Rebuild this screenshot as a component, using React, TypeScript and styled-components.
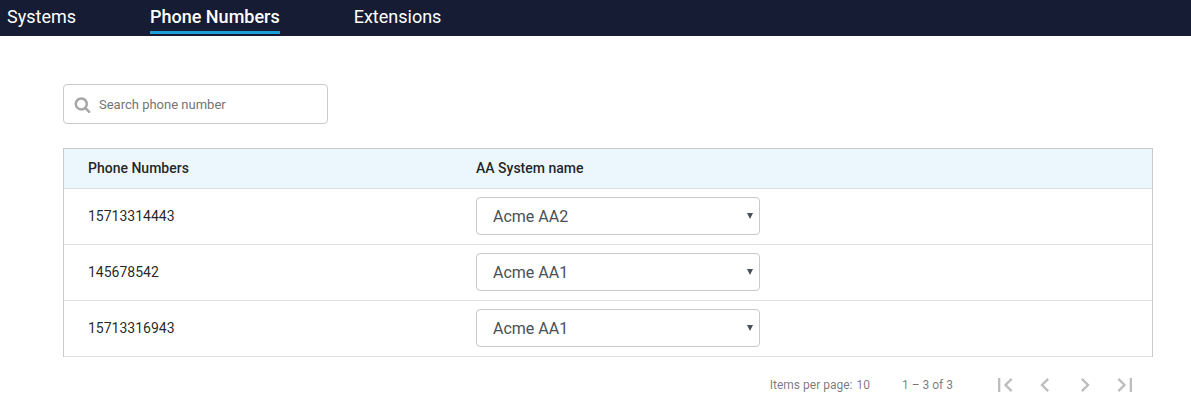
import React from "react";
import styled, { createGlobalStyle } from "styled-components";

const GlobalStyle = createGlobalStyle`
  *, *::before, *::after { box-sizing: border-box; }
  body {
    margin: 0;
    background: #fff;
    font-family: Roboto, "Liberation Sans", sans-serif;
    color: rgba(0, 0, 0, 0.87);
  }
`;

const NavBar = styled.nav`
  display: flex;
  height: 36px;
  padding-left: 7px;
  gap: 74px;
  background: #151c33;
`;

const NavLink = styled.a<{ $active?: boolean }>`
  height: 34px;
  color: #fff;
  font-size: 18px;
  line-height: 33px;
  font-weight: ${(p) => (p.$active ? 500 : 400)};
  border-bottom: 3px solid ${(p) => (p.$active ? "#1e9fd8" : "transparent")};
  white-space: nowrap;
`;

const Content = styled.main`
  padding: 48px 38px 0 63px;
`;

const SearchBox = styled.label`
  display: flex;
  align-items: center;
  width: 265px;
  height: 40px;
  padding: 0 10px;
  border: 1px solid #c9cacc;
  border-radius: 4px;
`;

const SearchIcon = styled.svg`
  width: 17px;
  height: 17px;
  flex: none;
  fill: #a6a6a6;
`;

const SearchInput = styled.input`
  flex: 1;
  min-width: 0;
  margin-left: 8px;
  padding: 0;
  border: 0;
  outline: 0;
  background: transparent;
  font: 400 13px Roboto, sans-serif;
  &::placeholder { color: #757575; opacity: 1; }
`;

const Table = styled.section`
  margin-top: 24px;
  border: 1px solid #c9cacc;
  border-bottom: 0;
`;

const Row = styled.div<{ $header?: boolean }>`
  display: grid;
  grid-template-columns: 388px 1fr;
  align-items: center;
  height: ${(p) => (p.$header ? 40 : 56)}px;
  padding: 0 24px 1px;
  border-bottom: 1px solid #dfe0e0;
  background: ${(p) => (p.$header ? "#ebf6fd" : "#fff")};
  font-size: 14px;
  font-weight: ${(p) => (p.$header ? 500 : 400)};
`;

const Select = styled.button`
  display: flex;
  align-items: center;
  justify-content: space-between;
  width: 284px;
  height: 38px;
  padding: 1px 6px 0 16px;
  border: 1px solid #c9cacc;
  border-radius: 4px;
  background: #fff;
  color: #495057;
  font: 400 16px Roboto, sans-serif;
`;

const Caret = styled.svg`
  width: 6px;
  height: 6px;
  margin-bottom: 1px;
  fill: #495057;
`;

const Paginator = styled.footer`
  display: flex;
  align-items: center;
  justify-content: flex-end;
  height: 56px;
  padding-right: 8px;
  color: rgba(0, 0, 0, 0.54);
  font-size: 12px;
`;

const PageSize = styled.div`
  display: flex;
  gap: 4px;
`;

const Range = styled.div`
  margin: 0 32px;
`;

const PageButton = styled.button`
  display: flex;
  align-items: center;
  justify-content: center;
  width: 40px;
  height: 40px;
  padding: 0;
  border: 0;
  background: transparent;
  svg { width: 28px; height: 28px; fill: rgba(0, 0, 0, 0.26); }
`;

const numbers = [
  { number: "15713314443", system: "Acme AA2" },
  { number: "145678542", system: "Acme AA1" },
  { number: "15713316943", system: "Acme AA1" },
];

const pageActions = [
  { label: "First page", d: "M18.41 16.59L13.82 12l4.59-4.59L17 6l-6 6 6 6zM6 6h2v12H6z" },
  { label: "Previous page", d: "M15.41 7.41L14 6l-6 6 6 6 1.41-1.41L10.83 12z" },
  { label: "Next page", d: "M10 6L8.59 7.41 13.17 12l-4.58 4.59L10 18l6-6z" },
  { label: "Last page", d: "M5.59 7.41L10.18 12l-4.59 4.59L7 18l6-6-6-6zM16 6h2v12h-2z" },
];

export default function App() {
  return (
    <>
      <GlobalStyle />
      <NavBar>
        <NavLink>Systems</NavLink>
        <NavLink $active>Phone Numbers</NavLink>
        <NavLink>Extensions</NavLink>
      </NavBar>
      <Content>
        <SearchBox>
          <SearchIcon viewBox="0 0 1792 1792">
            <path d="M1216 832q0-185-131.5-316.5t-316.5-131.5-316.5 131.5-131.5 316.5 131.5 316.5 316.5 131.5 316.5-131.5 131.5-316.5zm512 832q0 52-38 90t-90 38q-54 0-90-38l-343-342q-179 124-399 124-143 0-273.5-55.5t-225-150-150-225-55.5-273.5 55.5-273.5 150-225 225-150 273.5-55.5 273.5 55.5 225 150 150 225 55.5 273.5q0 220-124 399l343 343q37 37 37 90z" />
          </SearchIcon>
          <SearchInput placeholder="Search phone number" />
        </SearchBox>
        <Table>
          <Row $header>
            <span>Phone Numbers</span>
            <span>AA System name</span>
          </Row>
          {numbers.map((item) => (
            <Row key={item.number}>
              <span>{item.number}</span>
              <Select>
                {item.system}
                <Caret viewBox="0 0 6 6">
                  <path d="M0 0h6L3 6z" />
                </Caret>
              </Select>
            </Row>
          ))}
        </Table>
        <Paginator>
          <PageSize>
            <span>Items per page:</span>
            <span>10</span>
          </PageSize>
          <Range>1 – 3 of 3</Range>
          {pageActions.map((action) => (
            <PageButton key={action.label} aria-label={action.label}>
              <svg viewBox="0 0 24 24">
                <path d={action.d} />
              </svg>
            </PageButton>
          ))}
        </Paginator>
      </Content>
    </>
  );
}
